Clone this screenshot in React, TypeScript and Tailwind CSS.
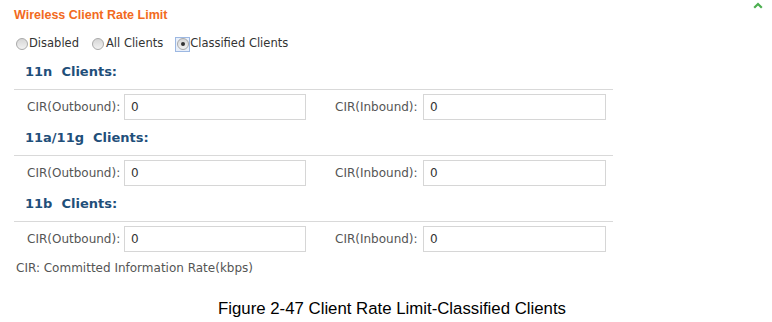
import { useState } from 'react';

const sections = ['11n  Clients:', '11a/11g  Clients:', '11b  Clients:'];
const modes = ['Disabled', 'All Clients', 'Classified Clients'];

function Radio({ checked, focused }: { checked: boolean; focused?: boolean }) {
  return (
    <span
      className={
        'flex items-center justify-center w-[15px] h-[15px] ' +
        (focused ? 'border border-[#9db8e2] bg-[#e8effa]' : '')
      }
    >
      <span className="flex items-center justify-center w-[12px] h-[12px] rounded-full border border-[#a9a9a9] bg-gradient-to-b from-[#d6d6d6] to-[#f2f2f2]">
        {checked && <span className="w-[4px] h-[4px] rounded-full bg-[#333]" />}
      </span>
    </span>
  );
}

function RateRow() {
  return (
    <div className="flex items-center pt-[4px] text-[12px]">
      <span className="w-[110px] pl-[13px] text-[#555]">CIR(Outbound):</span>
      <input
        defaultValue="0"
        className="w-[182px] h-[26px] border border-[#d6d6d6] pl-[6px] text-[#333] outline-none"
      />
      <span className="w-[117px] pl-[29px] text-[#555]">CIR(Inbound):</span>
      <input
        defaultValue="0"
        className="w-[183px] h-[26px] border border-[#d6d6d6] pl-[6px] text-[#333] outline-none"
      />
    </div>
  );
}

export default function App() {
  const [mode, setMode] = useState(2);

  return (
    <div className="relative w-[772px] h-[322px] bg-white font-['DejaVu_Sans',sans-serif] text-[11.5px] text-[#333]">
      <svg className="absolute top-[2px] left-[753px]" width="10" height="7" viewBox="0 0 10 7">
        <path d="M1.2 5.8 L5 2 L8.8 5.8" fill="none" stroke="#4caf50" strokeWidth="2.2" />
      </svg>

      <div className="pt-[6px] pl-[14px] h-[24px] leading-[18px] font-['Liberation_Sans',Arial,sans-serif] font-bold text-[12.5px] text-[#f26a21]">
        Wireless Client Rate Limit
      </div>

      <div className="mt-[13px] h-[14px] pl-[14px] flex items-center">
        {modes.map((m, i) => (
          <label key={m} className="flex items-center mr-[12px] cursor-pointer" onClick={() => setMode(i)}>
            <Radio checked={mode === i} focused={i === 2} />
            <span>{m}</span>
          </label>
        ))}
      </div>

      <div className="mt-[3px] ml-[14px] w-[599px]">
        {sections.map((s) => (
          <div key={s}>
            <div className="h-[35px] flex items-center pl-[11px] whitespace-pre font-bold text-[13px] text-[#1f4f7a]">
              {s}
            </div>
            <div className="border-t border-[#d9d9d9]" />
            <RateRow />
          </div>
        ))}
      </div>

      <div className="mt-[9px] pl-[16px] leading-[14px] text-[12px] text-[#555]">CIR: Committed Information Rate(kbps)</div>

      <div className="mt-[25px] flex justify-center pl-[12px] leading-[18px] font-['Liberation_Sans',Arial,sans-serif] text-[16.8px] text-black">
        Figure 2-47 Client Rate Limit-Classified Clients
      </div>
    </div>
  );
}
